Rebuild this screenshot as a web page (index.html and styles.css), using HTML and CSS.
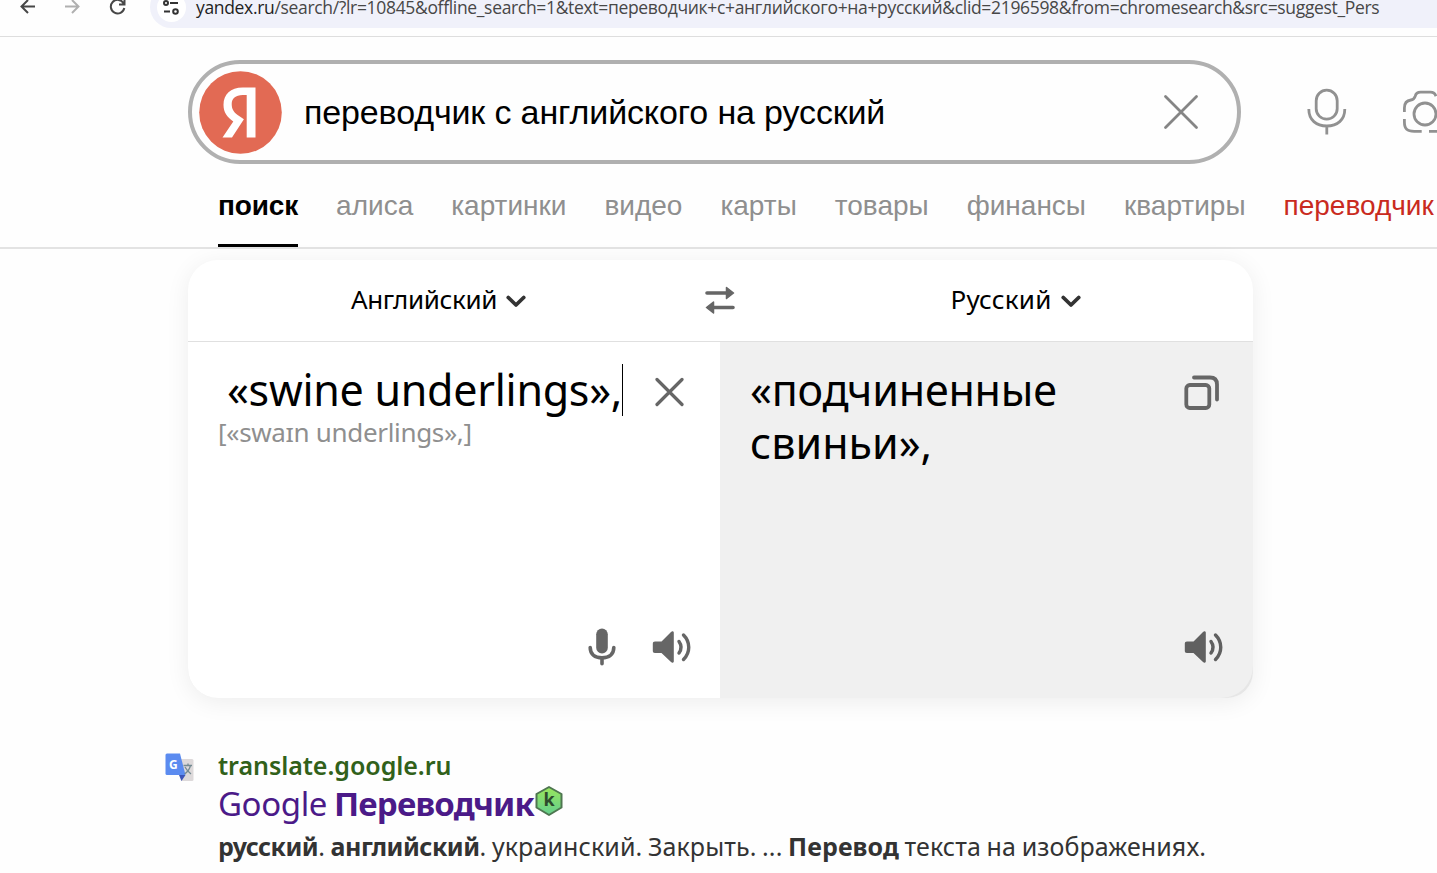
FILE: index.html
```html
<!DOCTYPE html>
<html lang="ru">
<head>
    <meta charset="UTF-8">
    <title>переводчик с английского на русский</title>
    <link rel="stylesheet" href="styles.css">
</head>
<body>
    <div class="browser-bar">
        <svg class="nav-icons" width="150" height="50" viewBox="0 0 150 50" fill="none" stroke-width="2">
            <path d="M35 20.5H21.5M28 14l-6.500 6.500 6.500 6.500" stroke="#474747"/>
            <path d="M65 20.500h13.500M72 14l6.500 6.500-6.500 6.500" stroke="#b0b0b0"/>
            <path d="M123.500 17.200a6.800 6.800 0 1 0 .8 4.800M124.500 13v5.500H119" stroke="#474747"/>
        </svg>
        <div class="address">
            <span class="site-info">
                <svg width="29" height="29" viewBox="0 0 29 29" fill="none" stroke="#333" stroke-width="2">
                    <circle cx="9" cy="10" r="2"/><path d="M13 10h8M7 18.500h6"/><circle cx="18.500" cy="18.500" r="2.300"/>
                </svg>
            </span>
            <span class="url"><b>yandex.ru</b>/search/?lr=10845&amp;offline_search=1&amp;text=переводчик+с+английского+на+русский&amp;clid=2196598&amp;from=chromesearch&amp;src=suggest_Pers</span>
        </div>
    </div>

    <header class="header">
        <form class="search">
            <svg class="logo" width="83" height="83" viewBox="0 0 83 83">
                <circle cx="41.500" cy="41.500" r="41.300" fill="#e26a54"/>
                <path d="M56.500 66.500H47.700V24h-4C36.500 24 32.700 27.600 32.700 33c0 6 2.600 8.800 7.800 12.300l4.400 3L33 66.500h-9.500L34.300 50.500C28 46 24.500 41.500 24.500 33.800 24.500 23.500 31.500 16.500 43.700 16.500h12.800z" fill="#fff"/>
            </svg>
            <span class="query">переводчик с английского на русский</span>
            <svg class="clear" width="36" height="36" viewBox="0 0 36 36" fill="none" stroke="#858585" stroke-width="2.800" stroke-linecap="round"><path d="M2.500 2.500l31 31M33.500 2.500l-31 31"/></svg>
        </form>
        <svg class="voice" width="40" height="48" viewBox="0 0 40 48" fill="none" stroke="#919191" stroke-width="2.800">
            <rect x="9.200" y="2.200" width="21" height="29" rx="10.500"/><path d="M1.800 21c0 11 7.500 17 18 17s18-6 18-17M19.800 38v8.500"/>
        </svg>
        <svg class="camera" width="34" height="48" viewBox="0 0 34 48" fill="none" stroke="#919191" stroke-width="2.800">
            <circle cx="22" cy="26" r="11"/>
            <path d="M1.400 24v-4c0-5 2.500-7.500 6.500-8 3-.4 3.500-1.500 4.300-3.800C13 5 14.500 4.200 17.500 4.200h10c3 0 4.500 1 5.500 4M1.400 31v3c0 7 2.800 9.300 9.800 9.300h7.500M26 43.300h8"/>
        </svg>
    </header>

    <nav class="tabs">
        <a class="tab active">поиск</a>
        <a class="tab">алиса</a>
        <a class="tab">картинки</a>
        <a class="tab">видео</a>
        <a class="tab">карты</a>
        <a class="tab">товары</a>
        <a class="tab">финансы</a>
        <a class="tab">квартиры</a>
        <a class="tab red">переводчик</a>
    </nav>

    <main>
        <section class="translator">
            <div class="langs">
                <span class="lang"><span class="lang-name from">Английский</span><svg width="20" height="14" viewBox="0 0 20 14" fill="none" stroke="#333" stroke-width="3.800" stroke-linecap="round" stroke-linejoin="round"><path d="M2.300 3.500l7.700 7.500 7.700-7.500"/></svg></span>
                <svg class="swap" width="30" height="28" viewBox="0 0 30 28" fill="none" stroke="#666" stroke-width="3.600" stroke-linecap="round">
                    <path d="M2 7h19M28 21.500H9"/><path d="M21.500 1.500L28.500 7l-7 5.500zM8.500 16L1.500 21.500l7 5.500z" fill="#666" stroke-width="1.500" stroke-linejoin="round"/>
                </svg>
                <span class="lang"><span class="lang-name to">Русский</span><svg width="20" height="14" viewBox="0 0 20 14" fill="none" stroke="#333" stroke-width="3.800" stroke-linecap="round" stroke-linejoin="round"><path d="M2.300 3.500l7.700 7.500 7.700-7.500"/></svg></span>
            </div>
            <div class="panes">
                <div class="pane source">
                    <div class="pane-top">
                        <p class="text"><span class="source-text">«swine underlings»,</span><i class="caret"></i></p>
                        <svg class="icon-x" width="30" height="30" viewBox="0 0 30 30" fill="none" stroke="#666" stroke-width="3.200" stroke-linecap="round"><path d="M2 2.500l25 25M27 2.500l-25 25"/></svg>
                    </div>
                    <p class="transcription">[«swaɪn underlings»,]</p>
                    <div class="actions">
                        <svg width="28" height="38" viewBox="0 0 28 38" fill="none" stroke="#666" stroke-width="3.600" stroke-linecap="round">
                            <rect x="8.200" y=".5" width="11.600" height="25" rx="5.800" fill="#666" stroke="none"/><path d="M2.200 19.500c0 6.500 4.500 10.300 11.800 10.300s11.800-3.800 11.800-10.300M14 30v5.700"/>
                        </svg>
                        <svg width="40" height="34" viewBox="0 0 40 34" fill="none" stroke="#666" stroke-width="3.400" stroke-linecap="round">
                            <path d="M3 11.500h6.500L19 2c1.300-1.200 2.800-.8 2.800.8v28.400c0 1.600-1.500 2-2.800.8l-9.500-9H3c-1.500 0-2.200-.7-2.200-2.200V13.700c0-1.500.7-2.200 2.200-2.200z" fill="#666" stroke="none"/><path d="M27 11.500c2.500 3.500 2.500 8 0 11.500M31.500 5c7 7 7 17.500 0 24.500"/>
                        </svg>
                    </div>
                </div>
                <div class="pane result">
                    <div class="pane-top">
                        <p class="text"><span class="result-one">«подчиненные</span><br><span class="result-two">свиньи»,</span></p>
                        <svg class="icon-copy" width="36" height="36" viewBox="0 0 36 36" fill="none" stroke="#666" stroke-width="3.800" stroke-linecap="round"><rect x="2.300" y="10" width="23" height="23" rx="3.500"/><path d="M10 2.500h16c4.500 0 7 2.500 7 7v15"/></svg>
                    </div>
                    <div class="actions">
                        <svg width="40" height="34" viewBox="0 0 40 34" fill="none" stroke="#606060" stroke-width="3.400" stroke-linecap="round">
                            <path d="M3 11.500h6.500L19 2c1.300-1.200 2.800-.8 2.800.8v28.400c0 1.600-1.500 2-2.800.8l-9.500-9H3c-1.500 0-2.200-.7-2.200-2.200V13.700c0-1.500.7-2.200 2.200-2.200z" fill="#606060" stroke="none"/><path d="M27 11.500c2.500 3.500 2.500 8 0 11.500M31.500 5c7 7 7 17.500 0 24.500"/>
                        </svg>
                    </div>
                </div>
            </div>
        </section>

        <article class="snippet">
            <svg class="favicon" width="29" height="29" viewBox="0 0 29 29">
                <path d="M11 6h16q1.500 0 1.500 1.500v19q0 1.500-1.500 1.500H16z" fill="#ddd9da"/>
                <path d="M14 22h6.500L16.500 28z" fill="#3d55b8"/>
                <path d="M2 .5h13L20.500 22H2Q.5 22 .5 20.500V2Q.5.500 2 .500z" fill="#5b8bf0"/>
                <path d="M18.500 12.500h8.500M23 10.500v2M25.500 12.500c-1 4-3 6.500-6 8.500M20 14c1.500 3 3.500 5 6 7" fill="none" stroke="#758b93" stroke-width="1.300"/>
                <text x="4" y="15.500" class="favicon-g">G</text>
            </svg>
            <div class="snippet-body">
                <div class="site">translate.google.ru</div>
                <h2 class="title"><span class="title-google">Google</span> <b>Переводчик</b><svg class="badge" width="30" height="32" viewBox="0 0 30 32">
                    <defs><linearGradient id="hex" x2="0" y2="1"><stop offset="0" stop-color="#99e65c"/><stop offset="1" stop-color="#63ce8d"/></linearGradient></defs>
                    <path d="M15 2l12.500 7v13.500L15 30 2.500 22.500V9z" fill="url(#hex)" stroke="#4e7650" stroke-width="2" stroke-linejoin="round"/>
                    <text x="9.500" y="21" class="badge-k">k</text></svg></h2>
                <p class="description"><b class="tight">русский</b>. <b class="tight">английский</b>. украинский. Закрыть. ... <b>Перевод</b> текста на изображениях.</p>
            </div>
        </article>
    </main>
</body>
</html>
```
FILE: styles.css
```css
* {
    box-sizing: border-box;
}

body {
    margin: 0;
    height: 873px;
    overflow: hidden;
    background-color: #fefefe;
    font-family: "Noto Sans", sans-serif;
    color: #000;
}

svg {
    display: block;
    flex-shrink: 0;
}

h2, p {
    margin: 0;
}

.browser-bar {
    height: 37px;
    display: flex;
    overflow: hidden;
    border-bottom: 1px solid #dedede;
}

.nav-icons {
    margin-top: -14px;
}

.address {
    display: flex;
    align-items: center;
    width: 1320px;
    height: 42px;
    margin-top: -14px;
    padding-left: 7px;
    flex-shrink: 0;
    border-radius: 21px;
    background-color: #f0f1fa;
}

.site-info {
    width: 29px;
    height: 29px;
    margin-right: 10px;
    border-radius: 50%;
    background-color: #fff;
}

.url {
    font-family: "Open Sans", sans-serif;
    font-size: 17.5px;
    letter-spacing: -0.33px;
    line-height: 42px;
    white-space: nowrap;
    color: #474747;
}

.url b {
    font-weight: normal;
    color: #1f1f1f;
}

.header {
    display: flex;
    align-items: center;
    height: 104px;
    margin-top: 23px;
    padding-left: 188px;
    overflow: hidden;
}

.search {
    display: flex;
    align-items: center;
    width: 1053px;
    height: 104px;
    padding-left: 7px;
    flex-shrink: 0;
    border: 4px solid #b0b0b0;
    border-radius: 52px;
}

.query {
    margin-left: 22px;
    font-family: "Liberation Sans", Arial, sans-serif;
    font-size: 34px;
    letter-spacing: -0.13px;
    white-space: nowrap;
}

.clear {
    margin-left: auto;
    margin-right: 38px;
}

.voice {
    margin-left: 66px;
}

.camera {
    margin-left: 56px;
}

.tabs {
    display: flex;
    gap: 38px;
    height: 85px;
    padding-left: 218px;
    overflow: hidden;
    border-bottom: 2px solid #e3e3e3;
    font-family: "Liberation Sans", Arial, sans-serif;
    font-size: 28px;
    line-height: 83px;
    color: #8f8f8f;
}

.tab {
    white-space: nowrap;
}

.active {
    font-weight: bold;
    letter-spacing: -0.15px;
    color: #000;
    background: linear-gradient(#000, #000) bottom / 100% 3px no-repeat;
}

.red {
    color: #c92a20;
}

.translator {
    width: 1065px;
    height: 438px;
    margin: 11px 0 0 188px;
    overflow: hidden;
    border-radius: 30px 30px 26px 30px;
    background-color: #fff;
    box-shadow: 0 4px 24px rgba(0, 0, 0, 0.07);
}

.langs {
    display: grid;
    grid-template-columns: 1fr 30px 1fr;
    align-items: center;
    height: 82px;
    border-bottom: 1px solid #e0e0e0;
}

.lang {
    display: flex;
    align-items: center;
    gap: 9px;
    font-size: 26px;
    line-height: 36px;
}

.lang:first-child {
    padding-left: 163px;
}

.lang:last-child {
    padding-left: 215px;
}

.lang-name {
    margin-top: -3px;
}

.from {
    letter-spacing: -0.35px;
}

.to {
    letter-spacing: 0.2px;
}

.swap {
    margin: -2px 0 0 -1px;
}

.panes {
    display: grid;
    grid-template-columns: 532px 533px;
    height: 356px;
    background-color: #e6e6e6;
}

.pane {
    display: flex;
    flex-direction: column;
    padding: 21px 30px 31px;
}

.source {
    padding-right: 28px;
    background-color: #fff;
}

.result {
    padding-right: 29px;
    border-bottom-right-radius: 32px;
    background-color: #f0f0f0;
}

.pane-top {
    display: flex;
    justify-content: space-between;
}

.text {
    font-size: 43px;
    line-height: 53px;
    white-space: nowrap;
}

.source .text {
    display: flex;
    padding-left: 9px;
}

.source-text {
    letter-spacing: -0.27px;
}

.result-one {
    letter-spacing: -0.2px;
}

.caret {
    width: 1px;
    height: 52px;
    margin-top: 1px;
    background-color: #000;
}

.icon-x {
    margin: 14px 7px 0 0;
}

.icon-copy {
    margin: 12px 4px 0 0;
}

.transcription {
    margin-top: -2px;
    font-size: 26px;
    letter-spacing: -0.33px;
    line-height: 36px;
    color: #8f8f8f;
}

.actions {
    display: flex;
    align-items: center;
    justify-content: flex-end;
    gap: 36px;
    height: 40px;
    margin-top: auto;
}

.snippet {
    display: flex;
    margin: 51px 0 0 165px;
}

.favicon {
    margin: 4px 24px 0 0;
}

.favicon-g {
    font: bold 12px "Open Sans", sans-serif;
    fill: #fff;
}

.snippet-body {
    flex: 1;
}

.site {
    font-size: 25px;
    font-weight: 600;
    letter-spacing: -0.05px;
    line-height: 32px;
    color: #31611a;
}

.title {
    display: flex;
    gap: 7px;
    font-size: 33px;
    font-weight: normal;
    letter-spacing: -0.4px;
    line-height: 45px;
    white-space: nowrap;
    color: #4b1a88;
}

.title b {
    letter-spacing: -0.8px;
}

.badge {
    margin: 4px 0 0 -7px;
}

.badge-k {
    font: bold 18px "Noto Sans", sans-serif;
    fill: #2d4a2c;
}

.description {
    margin-top: 1px;
    font-size: 25px;
    letter-spacing: 0.1px;
    word-spacing: -1px;
    line-height: 38px;
    white-space: nowrap;
    color: #333;
}

.tight {
    letter-spacing: -0.5px;
}
```
